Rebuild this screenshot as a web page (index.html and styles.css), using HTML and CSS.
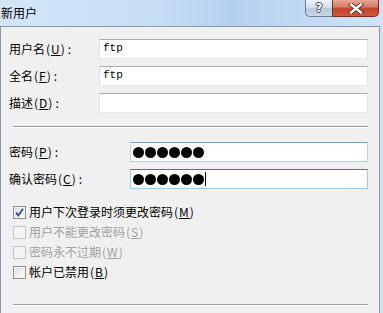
FILE: index.html
```html
<!DOCTYPE html>
<html>
<head>
    <title>新用户</title>
    <link rel="stylesheet" href="styles.css">
</head>
<body>
    <div class="window">
        <!-- Title bar -->
        <div class="titlebar">
            <span class="title">新用户</span>
            <div class="caption-buttons">
                <span class="btn-help">?</span>
                <span class="btn-close">
                    <svg width="18" height="11" viewBox="0 0 18 11">
                        <path d="M4 1.5 L14 9.5 M14 1.5 L4 9.5" stroke="#5a2a20" stroke-width="4.2" stroke-linecap="square"/>
                        <path d="M4 1.5 L14 9.5 M14 1.5 L4 9.5" stroke="#fff" stroke-width="2.4" stroke-linecap="square"/>
                    </svg>
                </span>
            </div>
        </div>

        <!-- Dialog body -->
        <div class="client">
            <div class="fields">
                <div class="row">
                    <label class="label name-label">用户名<span class="key">(<u>U</u>)</span>:</label>
                    <div class="textbox">ftp</div>
                </div>
                <div class="row">
                    <label class="label name-label">全名<span class="key">(<u>F</u>)</span>:</label>
                    <div class="textbox">ftp</div>
                </div>
                <div class="row">
                    <label class="label name-label">描述<span class="key">(<u>D</u>)</span>:</label>
                    <div class="textbox"></div>
                </div>
            </div>

            <div class="separator"></div>

            <div class="fields pw-fields">
                <div class="row">
                    <label class="label pw-label">密码<span class="key">(<u>P</u>)</span>:</label>
                    <div class="textbox password">
                        <span class="dot"></span><span class="dot"></span><span class="dot"></span><span class="dot"></span><span class="dot"></span><span class="dot"></span>
                    </div>
                </div>
                <div class="row">
                    <label class="label pw-label">确认密码<span class="key">(<u>C</u>)</span>:</label>
                    <div class="textbox password focused">
                        <span class="dot"></span><span class="dot"></span><span class="dot"></span><span class="dot"></span><span class="dot"></span><span class="dot"></span><span class="caret"></span>
                    </div>
                </div>
            </div>

            <div class="checks">
                <div class="check-row">
                    <span class="checkbox checked">
                        <svg width="9" height="9" viewBox="0 0 9 9"><path d="M1 4.5 L3.3 7.5 L8 0.8" fill="none" stroke="#2a4f8f" stroke-width="1.8"/></svg>
                    </span>
                    <span class="check-label">用户下次登录时须更改密码<span class="key">(<u>M</u>)</span></span>
                </div>
                <div class="check-row disabled">
                    <span class="checkbox"></span>
                    <span class="check-label">用户不能更改密码<span class="key">(<u>S</u>)</span></span>
                </div>
                <div class="check-row disabled">
                    <span class="checkbox"></span>
                    <span class="check-label">密码永不过期<span class="key">(<u>W</u>)</span></span>
                </div>
                <div class="check-row">
                    <span class="checkbox"></span>
                    <span class="check-label">帐户已禁用<span class="key">(<u>B</u>)</span></span>
                </div>
            </div>

            <div class="separator bottom"></div>
        </div>
    </div>
</body>
</html>
```

FILE: styles.css
```css
body {
    margin: 0;
    width: 383px;
    height: 313px;
    overflow: hidden;
    font-family: "Noto Sans CJK SC", "Noto Sans", sans-serif;
    font-size: 12px;
    color: #000;
    background: linear-gradient(to right, #d3e6f8 0%, #c6def5 40%, #b4d2ef 60%, #c4dcf3 85%, #cfe3f6 100%);
}

.window {
    width: 383px;
    height: 313px;
}

/* Aero title bar */
.titlebar {
    height: 26px;
    display: flex;
    justify-content: space-between;
    align-items: flex-start;
}

.title {
    padding-left: 1px;
    line-height: 26px;
    font-size: 12px;
}

.caption-buttons {
    display: flex;
    margin-right: 4px;
}

.btn-help {
    width: 27px;
    height: 17px;
    box-sizing: border-box;
    border: 1px solid #6f7d8f;
    border-top: none;
    border-right: none;
    border-bottom-left-radius: 5px;
    background: linear-gradient(to bottom, #eef3f9 0%, #d5e0ec 45%, #b8c8da 55%, #c9d6e5 100%);
    color: #fff;
    font-family: "DejaVu Sans", sans-serif;
    font-weight: bold;
    font-size: 12px;
    line-height: 16px;
    text-align: center;
    text-shadow: 1px 0 0 #3d4c5e, -1px 0 0 #3d4c5e, 0 1px 0 #3d4c5e, 0 -1px 0 #3d4c5e;
}

.btn-close {
    width: 47px;
    height: 17px;
    box-sizing: border-box;
    border: 1px solid #7a2a1e;
    border-top: none;
    border-bottom-right-radius: 5px;
    background: linear-gradient(to bottom, #e9a595 0%, #d8806b 40%, #c2432b 55%, #d0583e 100%);
    display: flex;
    justify-content: center;
    align-items: center;
}

/* Client area */
.client {
    width: 380px;
    height: 287px;
    box-sizing: border-box;
    border: 1px solid #8a96a6;
    border-bottom: none;
    background: #f0f0f0;
    padding: 12px 11px 0 8px;
}

.fields {
    display: flex;
    flex-direction: column;
    gap: 7px;
}

.row {
    display: flex;
    align-items: center;
    height: 20px;
}

.label {
    flex: none;
    line-height: 20px;
    white-space: nowrap;
}

/* mnemonic part, e.g. (U) */
.key {
    margin: 0 2px 0 1px;
    letter-spacing: 1px;
}

.name-label {
    width: 90px;
}

.pw-label {
    width: 121px;
}

.textbox {
    flex: 1;
    height: 20px;
    box-sizing: border-box;
    border: 1px solid #e2e3ea;
    border-top-color: #abadb3;
    border-bottom-color: #e3e9ef;
    background: #fff;
    padding-left: 3px;
    font-family: "Liberation Mono", monospace;
    font-size: 11px;
    line-height: 17px;
}

.password {
    display: flex;
    align-items: center;
    padding-left: 2px;
    border-color: #b7d0e6;
    border-top-color: #7f9db9;
}

.password.focused {
    border-color: #a4c9e3;
    border-top-color: #3d7bad;
}

.dot {
    width: 11px;
    height: 11px;
    margin-right: 1px;
    border-radius: 50%;
    background: #000;
}

.caret {
    width: 1px;
    height: 14px;
    background: #000;
}

.separator {
    margin: 13px 0 14px 4px;
    height: 1px;
    background: #a0a0a0;
    border-bottom: 1px solid #fff;
}

.separator.bottom {
    margin: 22px 0 0 4px;
}

/* Check boxes */
.checks {
    margin-top: 13px;
    padding-left: 4px;
}

.check-row {
    display: flex;
    align-items: center;
    height: 20px;
}

.checkbox {
    width: 13px;
    height: 13px;
    box-sizing: border-box;
    border: 1px solid #8e8f8f;
    background: linear-gradient(135deg, #dcdcdc 0%, #f4f4f4 70%, #fff 100%);
    box-shadow: inset 0 0 0 1px #f4f4f4;
    margin-right: 3px;
    display: flex;
    align-items: center;
    justify-content: center;
}

.check-label {
    line-height: 20px;
}

.disabled .checkbox {
    border-color: #c4c4c4;
    background: #f4f4f4;
    box-shadow: none;
}

.disabled .check-label {
    color: #a0a0a0;
}
```
